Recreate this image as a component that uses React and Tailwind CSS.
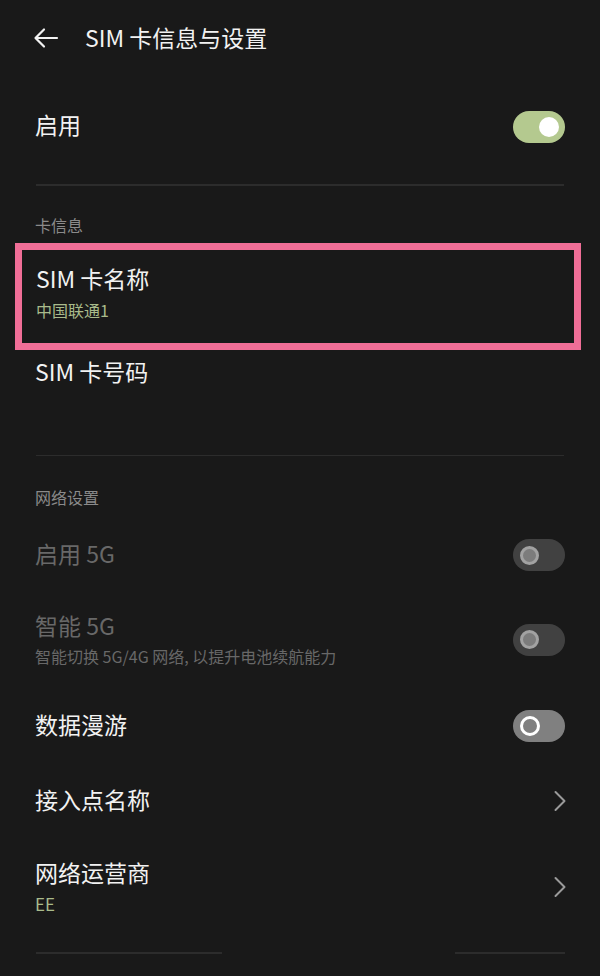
import React from "react";

const font = { fontFamily: '"Noto Sans CJK SC", "Noto Sans", sans-serif' };

function Toggle({ state }) {
  if (state === "on") {
    return (
      <div className="w-[52px] h-[32px] rounded-full bg-[#b4c98f] flex items-center justify-end pr-[6px]">
        <div className="w-[20px] h-[20px] rounded-full bg-white" />
      </div>
    );
  }
  if (state === "disabled") {
    return (
      <div className="w-[52px] h-[32px] rounded-full bg-[#414141] flex items-center pl-[7px]">
        <div className="w-[19px] h-[19px] rounded-full border-[3px] border-[#a2a2a2] bg-[#7c7c7c]" />
      </div>
    );
  }
  return (
    <div className="w-[52px] h-[32px] rounded-full bg-[#808080] flex items-center pl-[7px]">
      <div className="w-[20px] h-[20px] rounded-full border-[3px] border-white bg-[#808080]" />
    </div>
  );
}

function Chevron() {
  return (
    <svg width="14" height="22" viewBox="0 0 14 22" fill="none">
      <path d="M2.5 2 L11.5 11 L2.5 20" stroke="#9a9a9a" strokeWidth="2" strokeLinecap="round" strokeLinejoin="round" />
    </svg>
  );
}

export default function App() {
  return (
    <div className="w-[600px] h-[976px] bg-[#191919] flex flex-col overflow-hidden" style={font}>
      {/* Header */}
      <div className="h-[76px] flex items-center">
        <div className="pl-[33px] w-[85px] flex items-center">
          <svg width="26" height="22" viewBox="0 0 26 22" fill="none">
            <path d="M24 11 H3 M11 2.5 L2.5 11 L11 19.5" stroke="#f2f2f2" strokeWidth="2.2" strokeLinecap="round" strokeLinejoin="round" />
          </svg>
        </div>
        <span className="text-[23px] text-[#f2f2f2] leading-[30px] pb-[2px]">SIM 卡信息与设置</span>
      </div>

      {/* 启用 */}
      <div className="h-[102px] flex items-center justify-between px-[35px]">
        <span className="text-[23px] leading-[30px] pb-[6px] text-[#f2f2f2]">启用</span>
        <Toggle state="on" />
      </div>
      <div className="h-[6px]" />
      <div className="mx-[36px] h-[1.5px] bg-[#2c2c2c]" />

      {/* 卡信息 label */}
      <div className="h-[57px] flex items-end px-[35px] pb-[8px]">
        <span className="text-[16px] leading-[20px] text-[#8a8a8a]">卡信息</span>
      </div>

      {/* Highlighted SIM 卡名称 */}
      <div className="ml-[15px] mr-[19px] h-[107px] border-[7px] border-[#f06e97] flex flex-col justify-center pl-[14px] pb-[8px]">
        <span className="text-[23px] leading-[30px] text-[#f2f2f2]">SIM 卡名称</span>
        <span className="text-[16px] leading-[22px] mt-[6px] text-[#a9bb8b]">中国联通1</span>
      </div>

      {/* SIM 卡号码 */}
      <div className="h-[105px] px-[35px] pt-[6px]">
        <span className="text-[23px] leading-[30px] text-[#f2f2f2]">SIM 卡号码</span>
      </div>
      <div className="mx-[36px] h-[1.5px] bg-[#2c2c2c]" />

      {/* 网络设置 label */}
      <div className="h-[69px] flex items-end px-[35px] pb-[18px]">
        <span className="text-[16px] leading-[20px] text-[#8a8a8a]">网络设置</span>
      </div>

      {/* 启用 5G */}
      <div className="h-[60px] flex items-center justify-between px-[35px]">
        <span className="text-[23px] leading-[30px] pb-[4px] text-[#686868]">启用 5G</span>
        <Toggle state="disabled" />
      </div>

      {/* 智能 5G */}
      <div className="h-[115px] flex items-center justify-between px-[35px]">
        <div className="flex flex-col pb-[8px]">
          <span className="text-[23px] leading-[30px] text-[#686868]">智能 5G</span>
          <span className="text-[16px] leading-[22px] mt-[5px] text-[#686868]">智能切换 5G/4G 网络, 以提升电池续航能力</span>
        </div>
        <div className="mb-[6px]">
          <Toggle state="disabled" />
        </div>
      </div>

      {/* 数据漫游 */}
      <div className="h-[52px] flex items-center justify-between px-[35px]">
        <span className="text-[23px] leading-[30px] pb-[4px] text-[#f2f2f2]">数据漫游</span>
        <Toggle state="off" />
      </div>

      {/* 接入点名称 */}
      <div className="h-[98px] flex items-center justify-between pl-[35px] pr-[33px]">
        <span className="text-[23px] leading-[30px] pb-[4px] text-[#f2f2f2]">接入点名称</span>
        <Chevron />
      </div>

      {/* 网络运营商 */}
      <div className="h-[78px] flex items-center justify-between pl-[35px] pr-[33px]">
        <div className="flex flex-col pb-[7px]">
          <span className="text-[23px] leading-[30px] text-[#f2f2f2]">网络运营商</span>
          <span className="text-[17px] leading-[22px] mt-[6px] text-[#a9bb8b]">EE</span>
        </div>
        <div className="mb-[4px]">
          <Chevron />
        </div>
      </div>

      <div className="h-[24px]" />
      <div className="flex items-center">
        <div className="ml-[36px] w-[186px] h-[1.5px] bg-[#2c2c2c]" />
        <div className="flex-1" />
        <div className="mr-[35px] w-[110px] h-[1.5px] bg-[#2c2c2c]" />
      </div>
    </div>
  );
}
